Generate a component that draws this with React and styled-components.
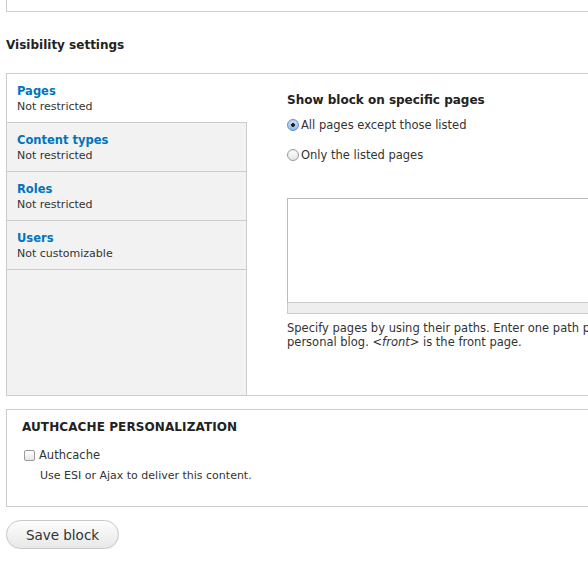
import React, { useState } from "react";
import styled, { createGlobalStyle, css } from "styled-components";

const GlobalStyle = createGlobalStyle`
  html, body {
    margin: 0;
    padding: 0;
    background: #fff;
    overflow: hidden;
  }
  body {
    font-family: "DejaVu Sans", "Open Sans", sans-serif;
    font-size: 11px;
    color: #333;
  }
`;

const Page = styled.div`
  padding-left: 6px;
  width: 620px;
`;

const TopFieldset = styled.div`
  height: 11px;
  border: 1px solid #ccc;
  border-top: none;
`;

const SectionTitle = styled.h2`
  margin: 25px 0 0;
  font-size: 12px;
  font-weight: bold;
  line-height: 16px;
  color: #222;
`;

const VerticalTabs = styled.div`
  display: flex;
  margin-top: 20px;
  border: 1px solid #ccc;
  height: 321px;
`;

const TabList = styled.ul`
  list-style: none;
  margin: 0;
  padding: 0;
  flex: 0 0 239px;
  background: #f2f2f2;
  border-right: 1px solid #ccc;
`;

const TabItem = styled.li`
  padding: 9px 10px 7px;
  border-bottom: 1px solid #ccc;
  cursor: pointer;
  ${(p) =>
    p.$active &&
    css`
      background: #fff;
      margin-right: -1px;
    `}
`;

const TabTitle = styled.a`
  display: block;
  color: #0074bd;
  font-weight: bold;
  font-size: 11.5px;
  line-height: 16px;
  text-decoration: none;
`;

const TabSummary = styled.div`
  line-height: 16px;
  color: #333;
`;

const Pane = styled.div`
  flex: 1;
  min-width: 0;
  padding: 18px 0 0 40px;
`;

const PaneTitle = styled.div`
  font-weight: bold;
  font-size: 12px;
  line-height: 16px;
  color: #222;
`;

const RadioList = styled.div`
  display: flex;
  flex-direction: column;
  gap: 14px;
  margin-top: 9px;
`;

const OptionRow = styled.label`
  display: flex;
  align-items: center;
  gap: 2px;
  line-height: 16px;
  font-size: 11.5px;
  color: #333;
`;

const RadioDot = styled.span`
  width: 12px;
  height: 12px;
  border-radius: 50%;
  box-sizing: border-box;
  border: 1px solid ${(p) => (p.$checked ? "#6b8fbf" : "#9a9a9a")};
  background: ${(p) =>
    p.$checked
      ? "radial-gradient(circle at 50% 50%, #222 0 1.6px, transparent 2.2px), linear-gradient(#cfe3fb, #8db9ee)"
      : "linear-gradient(#fff, #e4e4e4)"};
  box-shadow: inset 0 1px 1px rgba(0, 0, 0, 0.08);
  flex-shrink: 0;
`;

const TextareaWrap = styled.div`
  margin-top: 35px;
`;

const Textarea = styled.div`
  height: 104px;
  border: 1px solid #bbb;
  border-right: none;
  border-bottom: none;
  box-sizing: border-box;
  background: #fff;
`;

const Grippie = styled.div`
  height: 10px;
  background: #eee;
  border: 1px solid #ccc;
  border-right: none;
`;

const Description = styled.div`
  margin-top: 7px;
  line-height: 14px;
  font-size: 11.5px;
  color: #333;
  white-space: nowrap;
`;

const Fieldset = styled.div`
  margin-top: 13px;
  border: 1px solid #ccc;
  height: 87px;
  padding: 9px 15px 0;
`;

const Legend = styled.div`
  font-weight: bold;
  font-size: 12px;
  line-height: 16px;
  text-transform: uppercase;
  color: #222;
  letter-spacing: 0.1px;
`;

const CheckRow = styled(OptionRow)`
  margin-top: 12px;
  padding-left: 2px;
`;

const CheckBox = styled.span`
  width: 11px;
  height: 11px;
  border-radius: 2px;
  box-sizing: border-box;
  border: 1px solid #999;
  background: linear-gradient(#fff, #e6e6e6);
  flex-shrink: 0;
  margin-right: 2px;
`;

const CheckDescription = styled.div`
  margin: 6px 0 0 18px;
  line-height: 14px;
  color: #333;
`;

const SaveButton = styled.button`
  display: block;
  margin-top: 13px;
  width: 113px;
  height: 29px;
  border-radius: 15px;
  border: 1px solid #c8c8c8;
  background: linear-gradient(#fdfdfd, #e8e8e8);
  font-family: inherit;
  font-size: 13.5px;
  color: #333;
  box-shadow: 0 1px 1px rgba(0, 0, 0, 0.05);
  cursor: pointer;
`;

const tabs = [
  { title: "Pages", summary: "Not restricted" },
  { title: "Content types", summary: "Not restricted" },
  { title: "Roles", summary: "Not restricted" },
  { title: "Users", summary: "Not customizable" },
];

const App = () => {
  const [active, setActive] = useState(0);
  const [mode, setMode] = useState(0);

  return (
    <>
      <GlobalStyle />
      <Page>
        <TopFieldset />
        <SectionTitle>Visibility settings</SectionTitle>
        <VerticalTabs>
          <TabList>
            {tabs.map((tab, i) => (
              <TabItem key={tab.title} $active={i === active} onClick={() => setActive(i)}>
                <TabTitle>{tab.title}</TabTitle>
                <TabSummary>{tab.summary}</TabSummary>
              </TabItem>
            ))}
          </TabList>
          <Pane>
            <PaneTitle>Show block on specific pages</PaneTitle>
            <RadioList>
              {["All pages except those listed", "Only the listed pages"].map((label, i) => (
                <OptionRow key={label} onClick={() => setMode(i)}>
                  <RadioDot $checked={mode === i} />
                  {label}
                </OptionRow>
              ))}
            </RadioList>
            <TextareaWrap>
              <Textarea />
              <Grippie />
            </TextareaWrap>
            <Description>
              Specify pages by using their paths. Enter one path per line.
              <br />
              personal blog. <em>&lt;front&gt;</em> is the front page.
            </Description>
          </Pane>
        </VerticalTabs>
        <Fieldset>
          <Legend>Authcache personalization</Legend>
          <CheckRow>
            <CheckBox />
            Authcache
          </CheckRow>
          <CheckDescription>Use ESI or Ajax to deliver this content.</CheckDescription>
        </Fieldset>
        <SaveButton>Save block</SaveButton>
      </Page>
    </>
  );
};

export default App;
